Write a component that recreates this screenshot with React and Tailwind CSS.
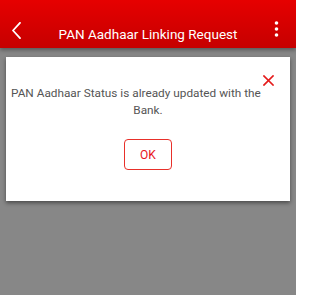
import React from "react";

export default function App() {
  return (
    <div className="w-[296px] h-[295px] bg-[#878787] overflow-hidden" style={{ fontFamily: "Roboto, 'Noto Sans', sans-serif" }}>
      <div className="h-12 flex items-start bg-gradient-to-b from-[#e60000] to-[#c60000] shadow-[0_2px_4px_rgba(0,0,0,0.35)] relative z-10">
        <div className="w-[40px] flex">
          <svg className="ml-[11px] mt-[22px]" width="11" height="17" viewBox="0 0 11 17" fill="none">
            <polyline points="9,0.8 2,8.5 9,16.2" stroke="white" strokeWidth="1.8" strokeLinecap="round" strokeLinejoin="round" />
          </svg>
        </div>
        <div className="flex-1 text-center mt-[25px] text-[13.5px] leading-[18px] text-white">PAN Aadhaar Linking Request</div>
        <div className="w-[40px] flex justify-end">
          <svg className="mr-[17px] mt-[21px]" width="5" height="16" viewBox="0 0 5 16" fill="white">
            <circle cx="2.5" cy="2" r="1.8" />
            <circle cx="2.5" cy="8" r="1.8" />
            <circle cx="2.5" cy="14" r="1.8" />
          </svg>
        </div>
      </div>
      <div className="relative mx-[6px] mt-[9px] h-[144px] bg-white shadow-[0_2px_4px_rgba(0,0,0,0.45)] flex flex-col">
        <svg className="absolute left-[257px] top-[18px]" width="11" height="11" viewBox="0 0 11 11">
          <path d="M1 1 L10 10 M10 1 L1 10" stroke="#e51b1b" strokeWidth="1.7" strokeLinecap="square" />
        </svg>
        <div className="pt-[28px] text-[11.8px] leading-[17px] text-[#555555]">
          <div className="pl-[5px]">PAN Aadhaar Status is already updated with the</div>
          <div className="text-center">Bank.</div>
        </div>
        <div className="flex justify-center mt-[20px]">
          <button className="w-[48px] h-[31px] border border-[#e8302a] rounded-[4px] text-[12px] text-[#e8141c] flex items-center justify-center">OK</button>
        </div>
      </div>
    </div>
  );
}
